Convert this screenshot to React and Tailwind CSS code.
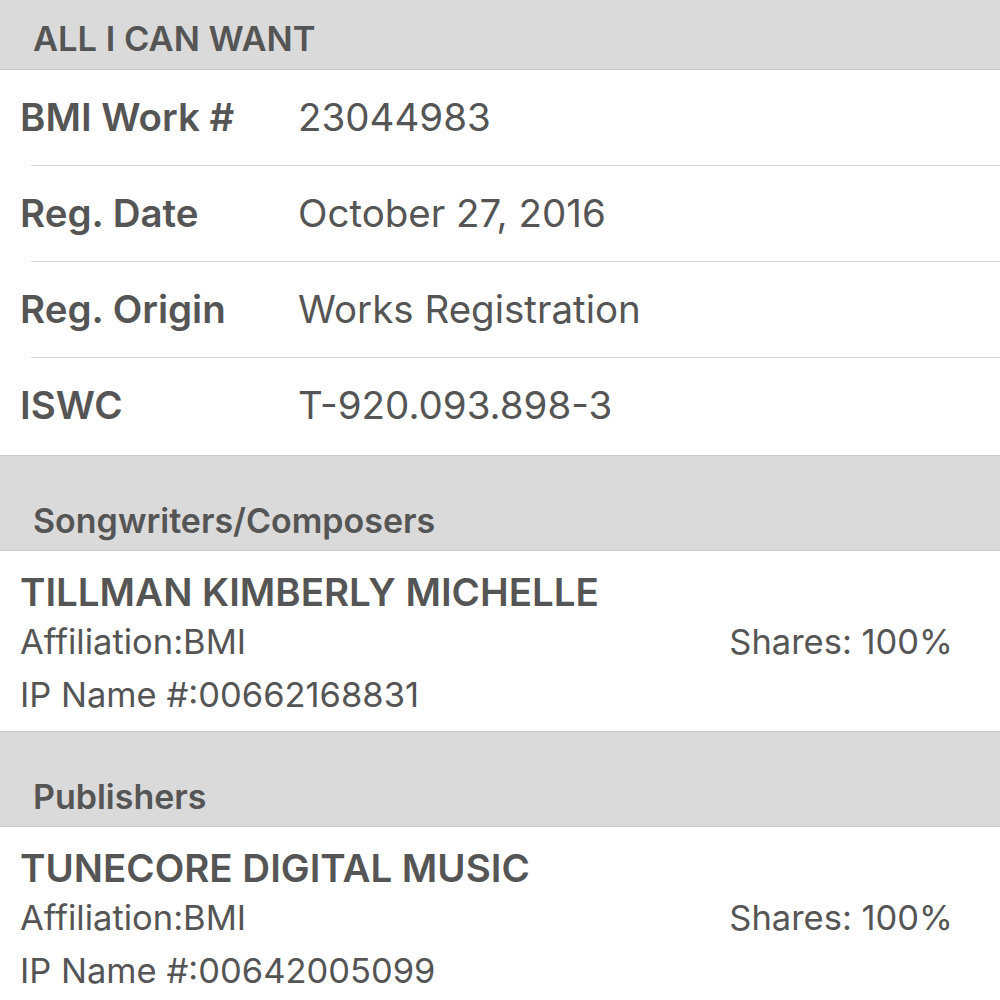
export default function App() {
  const rows = [
    ["BMI Work #", "23044983"],
    ["Reg. Date", "October 27, 2016"],
    ["Reg. Origin", "Works Registration"],
    ["ISWC", "T-920.093.898-3"],
  ];
  const font = { fontFamily: "Inter, 'Liberation Sans', sans-serif" };
  const Party = ({ name, ip }) => (
    <div className="h-[180px] bg-white pl-[20px] pr-[47px] pt-[18px] text-[#555]">
      <div className="text-[38.5px] font-semibold leading-[46px]">{name}</div>
      <div className="flex justify-between text-[34.5px] leading-[54px]">
        <span>Affiliation:BMI</span>
        <span>Shares: 100%</span>
      </div>
      <div className="text-[34.5px] leading-[52px]">IP Name #:{ip}</div>
    </div>
  );
  const Section = ({ title }) => (
    <div className="h-[96px] bg-[#dadada] border-y border-[#c8c8c8] flex items-end pl-[33px] pb-[8px]">
      <span className="text-[34px] font-semibold text-[#555] leading-[42px]">{title}</span>
    </div>
  );
  return (
    <div className="w-[1000px] h-[1000px] overflow-hidden bg-white" style={font}>
      <div className="h-[70px] bg-[#dadada] border-b border-[#c8c8c8] flex items-center pl-[33px]">
        <span className="text-[34.5px] font-semibold text-[#555] leading-[42px] mt-[8px]">ALL I CAN WANT</span>
      </div>
      {rows.map(([k, v], i) => (
        <div key={k} className="flex flex-col">
          <div className={`${i < rows.length - 1 ? "h-[95px]" : "h-[97px] pb-[2px]"} flex items-center text-[#555]`}>
            <span className="w-[298px] pl-[20px] text-[38.5px] font-semibold">{k}</span>
            <span className="text-[38.5px]">{v}</span>
          </div>
          {i < rows.length - 1 && <div className="ml-[31px] h-px bg-[#d4d4d4]" />}
        </div>
      ))}
      <Section title="Songwriters/Composers" />
      <Party name="TILLMAN KIMBERLY MICHELLE" ip="00662168831" />
      <Section title="Publishers" />
      <Party name="TUNECORE DIGITAL MUSIC" ip="00642005099" />
    </div>
  );
}
